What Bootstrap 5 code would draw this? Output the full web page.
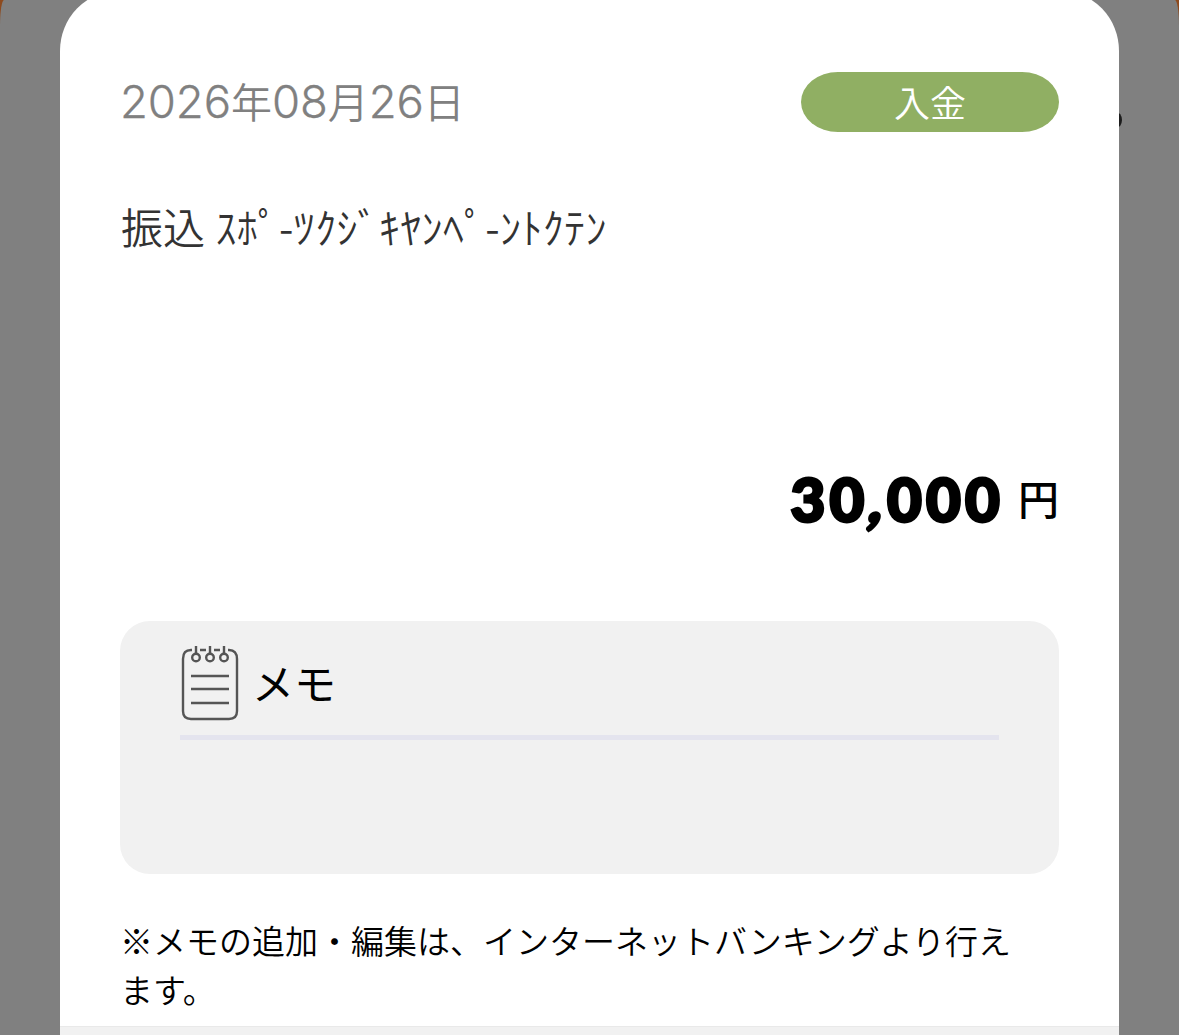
<!DOCTYPE html>
<html lang="ja">
<head>
<meta charset="utf-8">
<meta name="viewport" content="width=device-width, initial-scale=1">
<title>入出金明細</title>
<link rel="stylesheet" href="https://cdn.jsdelivr.net/npm/bootstrap@5.3.0/dist/css/bootstrap.min.css">
<style>
  body { background: #8d4a1e; font-family: "Noto Sans CJK JP", sans-serif; color: #000; }
  .backdrop-panel { height: 1035px; background: #808080; border-radius: 4px 4px 0 0 / 26px 26px 0 0; }
  .dot-peek { position: absolute; left: 1110px; top: 112px; width: 12px; height: 16px; border-radius: 50%; background: #1c1c1c; }
  .sheet { width: 1059px; height: 1056px; margin-top: -9px; padding: 81px 60px 0 61px; border-radius: 58px 58px 0 0 / 60px 60px 0 0; }
  .entry-date { font-size: 41px; line-height: 56px; height: 60px; font-weight: 350; color: #808080; white-space: nowrap; margin-left: -1px; }
  .entry-date .num { font-size: 45.500px; font-family: Inter, "Liberation Sans", sans-serif; font-weight: 300; line-height: 1; letter-spacing: -.1px; -webkit-text-stroke: .3px #808080; }
  .kind { width: 258px; height: 60px; border-radius: 37px / 30px; background: #90af63; font-size: 36px; font-weight: 350; line-height: 58px; }
  .desc { margin-top: 66px; height: 60px; font-size: 42px; font-weight: 350; line-height: 56px; color: #333; white-space: nowrap; }
  .kana { letter-spacing: .35px; margin-left: 1px; }
  .amount { margin-top: 211px; height: 62px; }
  .amount .figure { font-family: Lato, sans-serif; font-weight: 900; font-size: 60px; line-height: 60px; letter-spacing: 4.200px; -webkit-text-stroke: 3px #000; margin-right: 1px; }
  .amount .comma { display: inline-block; transform: skewX(-14deg) translateX(3px); }
  .amount .yen { font-size: 41px; font-weight: 500; line-height: 57px; margin-left: 13px; }
  .memo { margin: 90px 0 0 -1px; height: 253px; padding: 24px 60px 0; border-radius: 30px; background: #f1f1f1; }
  .memo-head { height: 95px; border-bottom: 5px solid #e4e4ee; }
  .memo-title { font-size: 42px; line-height: 73px; margin-left: 12px; }
  .note { margin: 42px 20px 0 -1px; font-size: 33px; line-height: 49px; font-weight: 350; }
  .foot { margin: 12px -60px 0 -61px; height: 30px; background: #f1f1f1; border-top: 1px solid #e9e9e9; }
</style>
</head>
<body class="overflow-hidden">
<main class="backdrop-panel position-relative overflow-hidden d-flex justify-content-center">
  <span class="dot-peek"></span>
  <section class="sheet bg-white position-relative flex-shrink-0">
    <div class="d-flex justify-content-between align-items-center">
      <div class="entry-date"><span class="num">2026</span>年<span class="num">08</span>月<span class="num">26</span>日</div>
      <div class="kind text-white text-center">入金</div>
    </div>
    <div class="desc">振込 <span class="kana">ｽﾎﾟ-ﾂｸｼﾞｷﾔﾝﾍﾟ-ﾝﾄｸﾃﾝ</span></div>
    <div class="amount d-flex justify-content-end"><span class="figure">30<span class="comma">,</span>000</span><span class="yen">円</span></div>
    <div class="memo">
      <div class="memo-head d-flex">
        <svg width="60" height="78" viewBox="0 0 60 78" fill="none" stroke="#555" stroke-width="2.4">
          <path d="M12 5H11Q3 5 3 14V66Q3 74 11 74H49Q57 74 57 66V14Q57 5 49 5H48M20 5H26M34 5H40"/>
          <path d="M11 31H49M11 44H49M11 58H49"/>
          <path d="M16 1V9M30 1V9M44 1V9"/>
          <circle cx="16" cy="12.500" r="3.800"/><circle cx="30" cy="12.500" r="3.800"/><circle cx="44" cy="12.500" r="3.800"/>
        </svg>
        <span class="memo-title">メモ</span>
      </div>
    </div>
    <div class="note">※メモの追加・編集は、インターネットバンキングより行えます。</div>
    <div class="foot"></div>
  </section>
</main>
<script src="https://cdn.jsdelivr.net/npm/bootstrap@5.3.0/dist/js/bootstrap.bundle.min.js"></script>
</body>
</html>
